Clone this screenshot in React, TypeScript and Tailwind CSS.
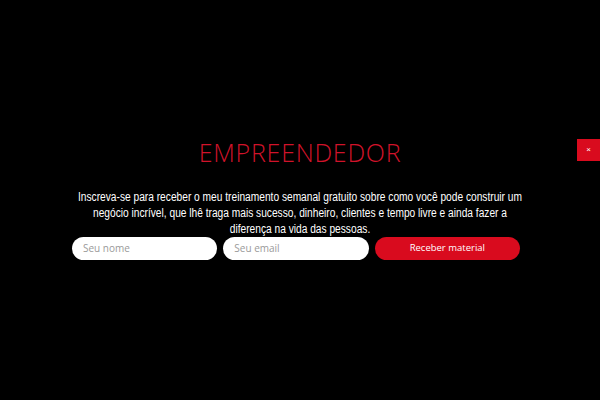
import React from "react";

export default function App() {
  return (
    <div className="relative w-[600px] h-[400px] bg-black overflow-hidden">
      <div className="flex flex-col items-center pt-[140px]">
        <h1 className="text-[25px] leading-[24px] tracking-[0.75px] text-[#d1132a] font-light" style={{ fontFamily: '"Open Sans", sans-serif' }}>
          EMPREENDEDOR
        </h1>
        <div className="mt-[25px] w-[448px] flex justify-center">
          <p className="shrink-0 w-[550px] scale-x-[0.815] origin-center text-center text-[12.5px] leading-[16px] text-white" style={{ fontFamily: '"Liberation Sans", Arial, sans-serif' }}>
            Inscreva-se para receber o meu treinamento semanal gratuito sobre como você pode construir um negócio incrível, que lhê traga mais sucesso, dinheiro, clientes e tempo livre e ainda fazer a diferença na vida das pessoas.
          </p>
        </div>
        <div className="grid grid-cols-3 gap-[6px] w-[448px] ml-[-8px]" style={{ fontFamily: '"Open Sans", sans-serif' }}>
          <div className="h-[23px] rounded-full bg-white flex items-center pl-[11px] text-[10px] text-[#9a9a9a]">Seu nome</div>
          <div className="h-[23px] rounded-full bg-white flex items-center pl-[11px] text-[10px] text-[#9a9a9a]">Seu email</div>
          <button className="h-[23px] rounded-full bg-[#d90b1e] flex items-center justify-center text-[9.5px] text-white">Receber material</button>
        </div>
      </div>
      <button className="absolute left-[577px] top-[139px] w-[23px] h-[22px] bg-[#d90b1e] flex items-center justify-center text-white text-[8px] leading-none" style={{ fontFamily: '"Liberation Sans", sans-serif' }}>
        ×
      </button>
    </div>
  );
}
